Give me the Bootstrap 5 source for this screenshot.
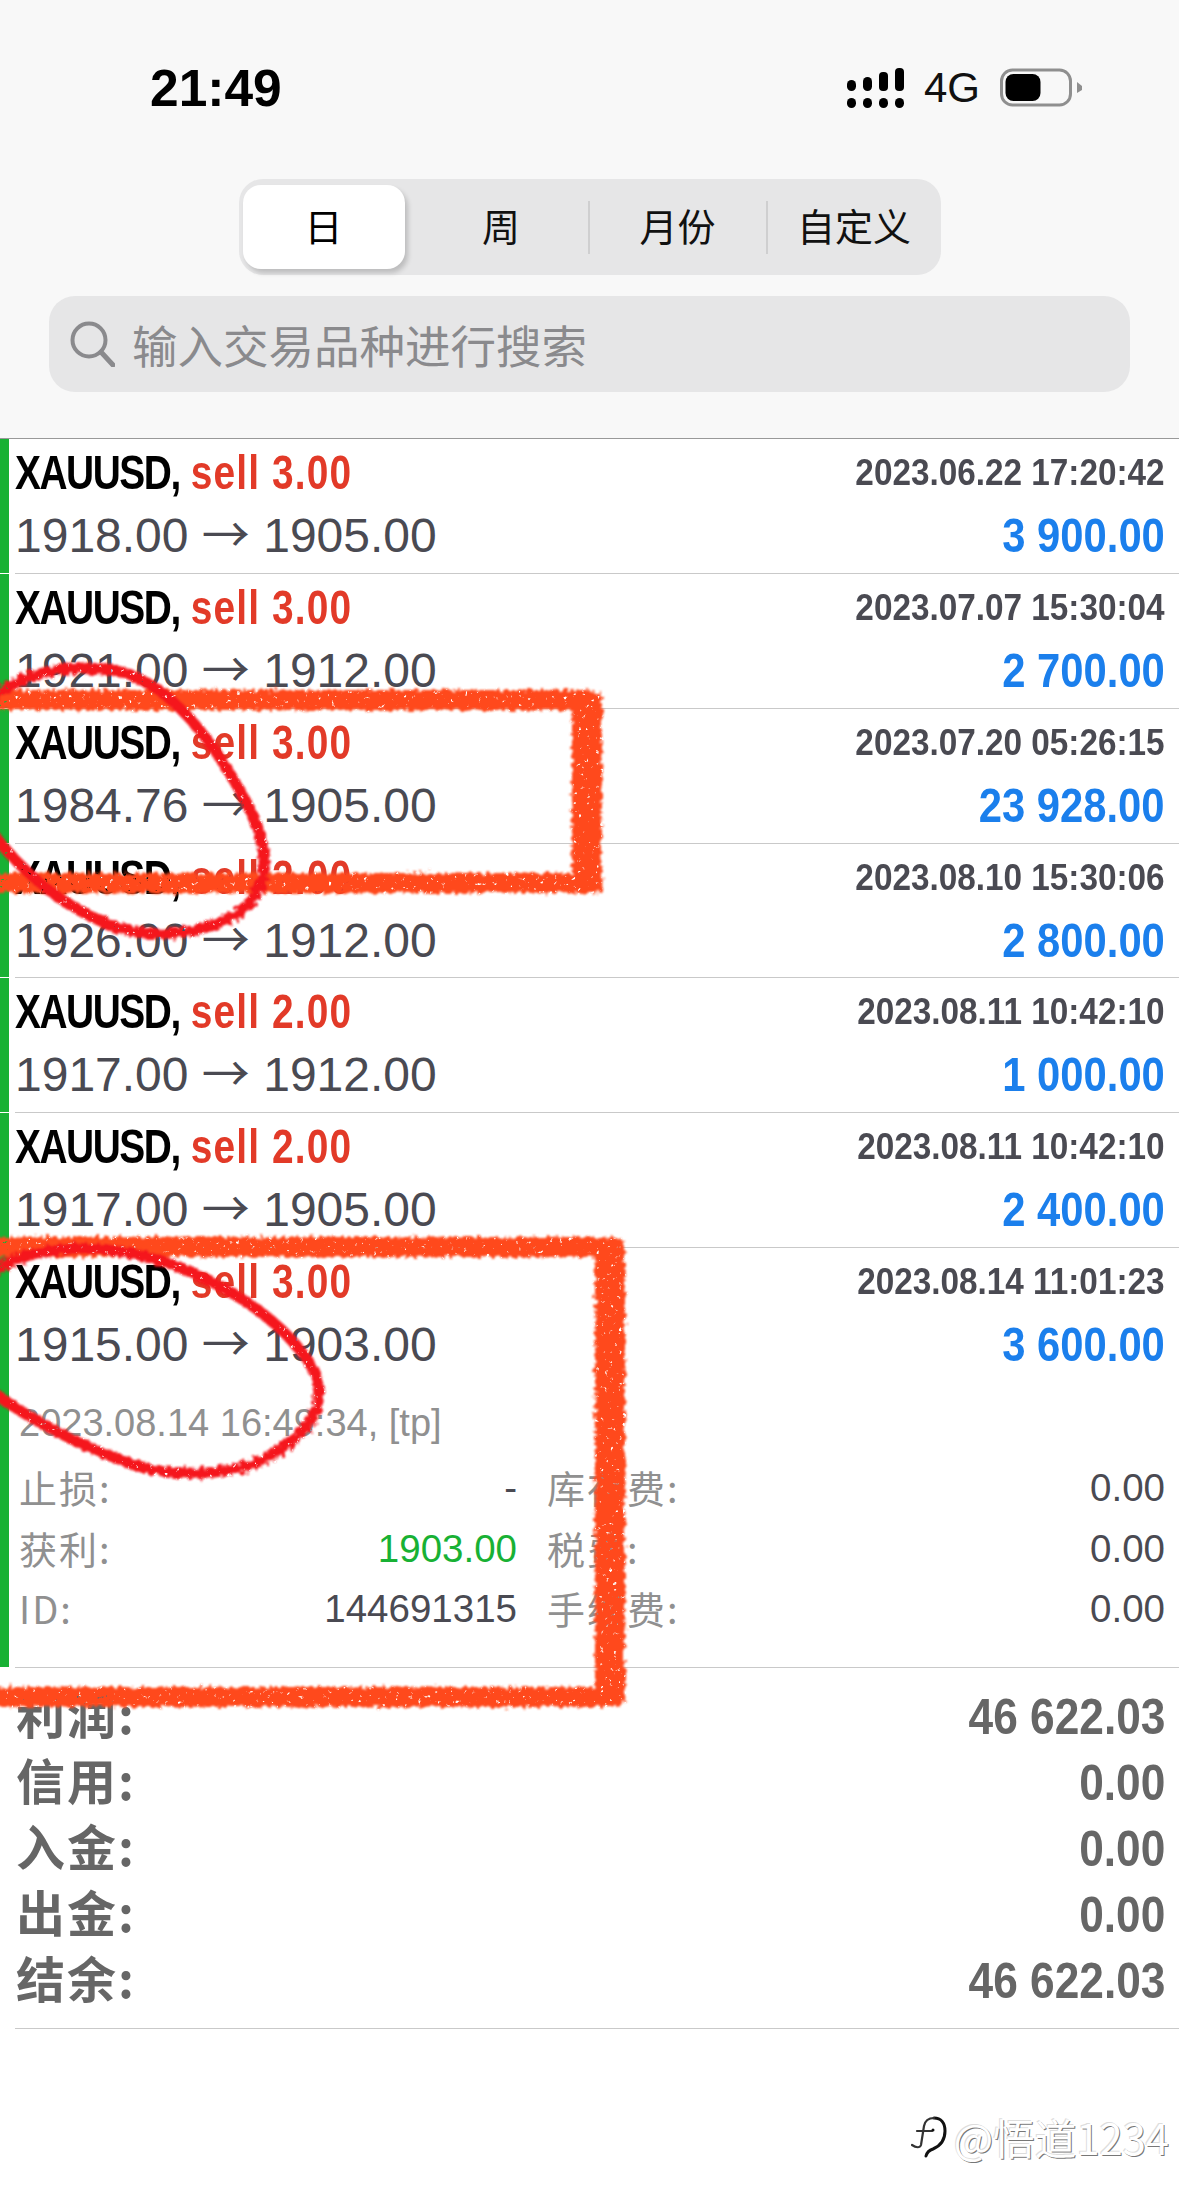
<!DOCTYPE html>
<html lang="zh-CN">
<head>
<meta charset="UTF-8">
<title>历史</title>
<link href="https://cdn.jsdelivr.net/npm/bootstrap@5.3.0/dist/css/bootstrap.min.css" rel="stylesheet">
<style>
    html, body { margin: 0; background: #fff; }
    .page-wrap {
        position: relative;
        width: 1179px;
        height: 2202px;
        overflow: hidden;
        background: #fff;
        font-family: "Liberation Sans", "Noto Sans CJK SC", sans-serif;
    }

    /* header */
    .top-head { height: 438px; background: #f8f8f8; padding-top: 60px; }
    .status-bar { height: 56px; padding: 0 97px 0 150px; }
    .clock { font-size: 51.5px; font-weight: 700; line-height: 56px; color: #000; }
    .net-label { font-size: 42px; line-height: 56px; color: #111; margin: 0 20px; }
    .seg-wrap { width: 702px; height: 96px; margin: 63px auto 0 auto; background: #e6e6e7; border-radius: 24px; padding: 6px 0 6px 4px; }
    .seg-item { font-family: "Noto Sans CJK SC", sans-serif; font-size: 38px; color: #111; line-height: 80px; height: 84px; text-align: center; }
    .seg-on { width: 162px; background: #fff; border-radius: 18px; box-shadow: 3px 4px 5px rgba(0,0,0,.18); color: #000; }
    .seg-two { width: 183px; padding-left: 10px; }
    .seg-three { width: 176px; }
    .seg-four { width: 173px; }
    .seg-line { width: 2px; height: 53px; background: #cfcfd0; }
    .search-box { height: 96px; margin: 21px 49px 0 49px; padding-left: 21px; background: #e6e6e7; border-radius: 26px; }
    .search-text { font-family: "Noto Sans CJK SC", sans-serif; font-size: 45.5px; color: #8a8a8d; margin-left: 17px; line-height: 96px; }

    /* trade rows */
    .trade-list { border-top: 1px solid #999; }
    .trade-row { position: relative; height: 134.85px; margin-left: 15px; padding: 2px 14px 0 0; border-bottom: 1px solid #c9c9c9; }
    .trade-row::before { content: ""; position: absolute; top: 0; bottom: 0; left: -15px; width: 9px; background: #18b134; }
    .trade-open { height: 420px; }
    .row-line { height: 63px; line-height: 63px; white-space: nowrap; }
    .squeeze-l { display: inline-block; transform: scaleX(.81); transform-origin: left center; }
    .squeeze-r { display: inline-block; transform: scaleX(.87); transform-origin: right center; }
    .deal-name { font-size: 48px; font-weight: 700; color: #000; letter-spacing: -1.8px; }
    .deal-sell { color: #e23a28; letter-spacing: 1.4px; margin-left: 2px; }
    .deal-price { font-size: 48px; color: #4a4a52; }
    .deal-arrow { font-family: "Noto Sans CJK SC", sans-serif; line-height: 0; }
    .deal-date { font-size: 37px; font-weight: 700; color: #4a4a52; transform: scaleX(.9); }
    .deal-gain { font-size: 48px; font-weight: 700; color: #1b7fec; }

    .deal-extra { margin-top: 17px; padding-left: 4px; color: #909090; }
    .close-info { font-size: 38px; line-height: 60px; height: 60px; white-space: nowrap; }
    .extra-grid { display: grid; grid-template-columns: 498px 618px; column-gap: 30px; margin-top: 5px; }
    .extra-cell { height: 60.5px; line-height: 60.5px; white-space: nowrap; }
    .extra-key { font-family: "Noto Sans CJK SC", sans-serif; font-size: 38px; letter-spacing: 2px; line-height: 58px; color: #909090; }
    .extra-val { font-size: 38.5px; color: #4a4a52; }
    .extra-tp { color: #18b134; }

    /* totals */
    .sum-box { margin-left: 15px; padding: 16px 14px 14px 1px; border-bottom: 1px solid #c9c9c9; }
    .sum-row { height: 66px; line-height: 66px; color: #666; font-weight: 700; }
    .sum-key { font-family: "Noto Sans CJK SC", sans-serif; font-size: 49px; letter-spacing: 2px; line-height: 58px; }
    .sum-val { font-size: 50px; transform: scaleX(.885); }

    /* watermark */
    .water-mark { margin-top: 84px; padding-right: 10px; height: 48px; }
    .water-text { font-family: "Noto Sans CJK SC", sans-serif; font-size: 41.7px; line-height: 48px; color: #fff;
        text-shadow: 1px 1px 0 #777, -1px -1px 0 #ddd; margin-left: 7px; }

    /* hand drawn marks over the screenshot */
    .mark-layer { position: absolute; top: 0; left: 0; pointer-events: none; }
</style>
</head>
<body>
<div class="page-wrap">

    <div class="top-head">
        <div class="status-bar d-flex align-items-center">
            <div class="clock">21:49</div>
            <div class="ms-auto d-flex align-items-center">
                <svg width="58" height="41" viewBox="0 0 58 41">
                    <g fill="#000">
                        <rect x="1" y="30" width="9" height="10" rx="4.5"/><rect x="1" y="12" width="9" height="11" rx="4.5"/>
                        <rect x="17" y="30" width="9" height="10" rx="4.5"/><rect x="17" y="9" width="9" height="14" rx="4.5"/>
                        <rect x="33" y="30" width="9" height="10" rx="4.5"/><rect x="33" y="4" width="9" height="19" rx="4"/>
                        <rect x="49" y="30" width="9" height="10" rx="4.5"/><rect x="49" y="0" width="9" height="23" rx="4"/>
                    </g>
                </svg>
                <div class="net-label">4G</div>
                <svg width="82" height="40" viewBox="0 0 82 40">
                    <rect x="1.5" y="2" width="69" height="35" rx="11" fill="none" stroke="#8f8f8f" stroke-width="3"/>
                    <rect x="5.5" y="6" width="35" height="27" rx="8" fill="#000"/>
                    <path d="M77 14l5 4v4l-5 3z" fill="#8f8f8f"/>
                </svg>
            </div>
        </div>

        <div class="seg-wrap d-flex align-items-center">
            <div class="seg-item seg-on">日</div>
            <div class="seg-item seg-two">周</div>
            <div class="seg-line"></div>
            <div class="seg-item seg-three">月份</div>
            <div class="seg-line"></div>
            <div class="seg-item seg-four">自定义</div>
        </div>

        <div class="search-box d-flex align-items-center">
            <svg width="45" height="46" viewBox="0 0 45 46">
                <circle cx="19" cy="19" r="16.5" fill="none" stroke="#8a8a8d" stroke-width="4"/>
                <path d="M31 31l12 13" stroke="#8a8a8d" stroke-width="5" stroke-linecap="round"/>
            </svg>
            <div class="search-text">输入交易品种进行搜索</div>
        </div>
    </div>

    <div class="trade-list">
        <div class="trade-row d-flex justify-content-between">
            <div>
                <div class="row-line"><span class="squeeze-l deal-name">XAUUSD, <span class="deal-sell">sell 3.00</span></span></div>
                <div class="row-line deal-price">1918.00 <span class="deal-arrow">→</span> 1905.00</div>
            </div>
            <div class="text-end">
                <div class="row-line"><span class="squeeze-r deal-date">2023.06.22 17:20:42</span></div>
                <div class="row-line"><span class="squeeze-r deal-gain">3 900.00</span></div>
            </div>
        </div>
        <div class="trade-row d-flex justify-content-between">
            <div>
                <div class="row-line"><span class="squeeze-l deal-name">XAUUSD, <span class="deal-sell">sell 3.00</span></span></div>
                <div class="row-line deal-price">1921.00 <span class="deal-arrow">→</span> 1912.00</div>
            </div>
            <div class="text-end">
                <div class="row-line"><span class="squeeze-r deal-date">2023.07.07 15:30:04</span></div>
                <div class="row-line"><span class="squeeze-r deal-gain">2 700.00</span></div>
            </div>
        </div>
        <div class="trade-row d-flex justify-content-between">
            <div>
                <div class="row-line"><span class="squeeze-l deal-name">XAUUSD, <span class="deal-sell">sell 3.00</span></span></div>
                <div class="row-line deal-price">1984.76 <span class="deal-arrow">→</span> 1905.00</div>
            </div>
            <div class="text-end">
                <div class="row-line"><span class="squeeze-r deal-date">2023.07.20 05:26:15</span></div>
                <div class="row-line"><span class="squeeze-r deal-gain">23 928.00</span></div>
            </div>
        </div>
        <div class="trade-row d-flex justify-content-between">
            <div>
                <div class="row-line"><span class="squeeze-l deal-name">XAUUSD, <span class="deal-sell">sell 2.00</span></span></div>
                <div class="row-line deal-price">1926.00 <span class="deal-arrow">→</span> 1912.00</div>
            </div>
            <div class="text-end">
                <div class="row-line"><span class="squeeze-r deal-date">2023.08.10 15:30:06</span></div>
                <div class="row-line"><span class="squeeze-r deal-gain">2 800.00</span></div>
            </div>
        </div>
        <div class="trade-row d-flex justify-content-between">
            <div>
                <div class="row-line"><span class="squeeze-l deal-name">XAUUSD, <span class="deal-sell">sell 2.00</span></span></div>
                <div class="row-line deal-price">1917.00 <span class="deal-arrow">→</span> 1912.00</div>
            </div>
            <div class="text-end">
                <div class="row-line"><span class="squeeze-r deal-date">2023.08.11 10:42:10</span></div>
                <div class="row-line"><span class="squeeze-r deal-gain">1 000.00</span></div>
            </div>
        </div>
        <div class="trade-row d-flex justify-content-between">
            <div>
                <div class="row-line"><span class="squeeze-l deal-name">XAUUSD, <span class="deal-sell">sell 2.00</span></span></div>
                <div class="row-line deal-price">1917.00 <span class="deal-arrow">→</span> 1905.00</div>
            </div>
            <div class="text-end">
                <div class="row-line"><span class="squeeze-r deal-date">2023.08.11 10:42:10</span></div>
                <div class="row-line"><span class="squeeze-r deal-gain">2 400.00</span></div>
            </div>
        </div>
        <div class="trade-row trade-open">
            <div class="d-flex justify-content-between">
                <div>
                    <div class="row-line"><span class="squeeze-l deal-name">XAUUSD, <span class="deal-sell">sell 3.00</span></span></div>
                    <div class="row-line deal-price">1915.00 <span class="deal-arrow">→</span> 1903.00</div>
                </div>
                <div class="text-end">
                    <div class="row-line"><span class="squeeze-r deal-date">2023.08.14 11:01:23</span></div>
                    <div class="row-line"><span class="squeeze-r deal-gain">3 600.00</span></div>
                </div>
            </div>
            <div class="deal-extra">
                <div class="close-info">2023.08.14 16:49:34, [tp]</div>
                <div class="extra-grid">
                    <div class="extra-cell d-flex justify-content-between"><span class="extra-key">止损:</span><span class="extra-val">-</span></div>
                    <div class="extra-cell d-flex justify-content-between"><span class="extra-key">库存费:</span><span class="extra-val">0.00</span></div>
                    <div class="extra-cell d-flex justify-content-between"><span class="extra-key">获利:</span><span class="extra-val extra-tp">1903.00</span></div>
                    <div class="extra-cell d-flex justify-content-between"><span class="extra-key">税费:</span><span class="extra-val">0.00</span></div>
                    <div class="extra-cell d-flex justify-content-between"><span class="extra-key">ID:</span><span class="extra-val">144691315</span></div>
                    <div class="extra-cell d-flex justify-content-between"><span class="extra-key">手续费:</span><span class="extra-val">0.00</span></div>
                </div>
            </div>
        </div>
    </div>

    <div class="sum-box">
        <div class="sum-row d-flex justify-content-between"><span class="sum-key">利润:</span><span class="squeeze-r sum-val">46 622.03</span></div>
        <div class="sum-row d-flex justify-content-between"><span class="sum-key">信用:</span><span class="squeeze-r sum-val">0.00</span></div>
        <div class="sum-row d-flex justify-content-between"><span class="sum-key">入金:</span><span class="squeeze-r sum-val">0.00</span></div>
        <div class="sum-row d-flex justify-content-between"><span class="sum-key">出金:</span><span class="squeeze-r sum-val">0.00</span></div>
        <div class="sum-row d-flex justify-content-between"><span class="sum-key">结余:</span><span class="squeeze-r sum-val">46 622.03</span></div>
    </div>

    <div class="water-mark d-flex justify-content-end align-items-center">
        <svg width="36" height="42" viewBox="0 0 36 42">
            <path d="M23 2c7 0 11 5 11 13 0 9-5 15-12 18-3 1-6 3-7 7" fill="none" stroke="#111" stroke-width="3" stroke-linecap="round"/>
            <path d="M6 15h15M23 2c-6 0-9 3-10 8l-3 19c-1 3-5 3-9 0" fill="none" stroke="#333" stroke-width="2.2" stroke-linecap="round"/>
            <circle cx="22" cy="14" r="1.5" fill="#111"/>
        </svg>
        <div class="water-text">@悟道1234</div>
    </div>

    <svg class="mark-layer" width="1179" height="2202" viewBox="0 0 1179 2202">
        <defs>
            <filter id="roughEdge" x="-5%" y="-5%" width="110%" height="110%">
                <feTurbulence type="fractalNoise" baseFrequency=".22" numOctaves="3" seed="4" result="grain"/>
                <feDisplacementMap in="SourceGraphic" in2="grain" scale="9" result="rough"/>
                <feGaussianBlur in="rough" stdDeviation="1.1" result="soft"/>
                <feColorMatrix in="grain" type="matrix" values="0 0 0 0 0  0 0 0 0 0  0 0 0 0 0  7 0 0 0 -1.2" result="mottle"/>
                <feComposite in="soft" in2="mottle" operator="in"/>
            </filter>
        </defs>
        <g fill="none" stroke-linejoin="round" filter="url(#roughEdge)">
            <g stroke="#ff4a1c">
                <path d="M-10 700H590" stroke-width="20"/>
                <path d="M587 692V892" stroke-width="30"/>
                <path d="M-10 883H598" stroke-width="20"/>
                <path d="M-10 1247H620" stroke-width="20"/>
                <path d="M610 1240V1700" stroke-width="30"/>
                <path d="M-10 1697H622" stroke-width="20"/>
            </g>
            <g stroke="#f5141a" stroke-width="11">
                <path d="M-10 700C20 672 70 664 110 670C170 678 215 745 245 800C272 850 272 890 235 915C200 935 150 940 110 925C60 905 20 870-10 830"/>
                <path d="M-10 1275C20 1250 70 1245 110 1250C180 1258 260 1300 300 1350C330 1385 325 1420 280 1450C240 1478 170 1480 120 1460C70 1440 30 1420-10 1390"/>
            </g>
        </g>
    </svg>

</div>
<script src="https://cdn.jsdelivr.net/npm/bootstrap@5.3.0/dist/js/bootstrap.bundle.min.js"></script>
</body>
</html>
